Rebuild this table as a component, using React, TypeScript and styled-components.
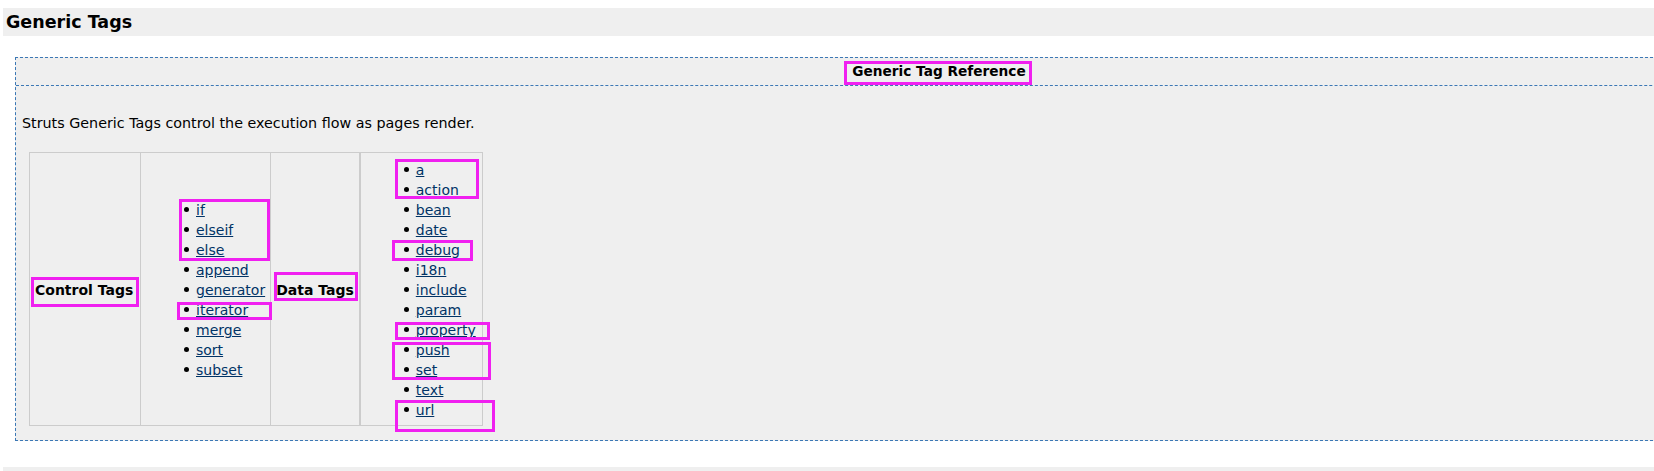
import React from "react";
import styled, { createGlobalStyle } from "styled-components";

const GlobalStyle = createGlobalStyle`
  html, body {
    margin: 0;
    padding: 0;
    background: #ffffff;
    overflow: hidden;
  }
  body {
    font-family: "DejaVu Sans", Verdana, sans-serif;
    font-size: 14px;
    color: #000000;
  }
`;

const Page = styled.div`
  position: relative;
  display: flow-root;
  width: 1654px;
  min-height: 471px;
`;

const SectionTitle = styled.h2`
  margin: 8px 0 0 3px;
  padding: 0 0 0 3px;
  height: 28px;
  line-height: 28px;
  background: #efefef;
  font-size: 17.5px;
  font-weight: bold;
  white-space: nowrap;
`;

const SectionBar = styled.div`
  margin: 26px 0 0 3px;
  height: 28px;
  background: #efefef;
`;

const Panel = styled.div`
  margin: 21px 0 0 15px;
  width: 1846px;
  background: #efefef;
  border: 1px dashed #3c78b5;
`;

const PanelHeader = styled.div`
  height: 27px;
  line-height: 27px;
  text-align: center;
  font-size: 13.7px;
  font-weight: bold;
  border-bottom: 1px dashed #3c78b5;
`;

const PanelBody = styled.div`
  padding: 29px 6px 14px 6px;
`;

const Intro = styled.p`
  margin: 0 0 21px 0;
  line-height: 16px;
  font-size: 14.3px;
`;

const TagTable = styled.table`
  margin-left: 7px;
  border-collapse: separate;
  border-spacing: 0;
  table-layout: fixed;
`;

const Cell = styled.td<{ $w: number; $left?: number; $last?: boolean }>`
  width: ${(p) => p.$w}px;
  padding: 7px 5px 5px 5px;
  vertical-align: middle;
  text-align: left;
  border-top: 1px solid #cccccc;
  border-bottom: 1px solid #cccccc;
  border-left: ${(p) => p.$left ?? 1}px solid #cccccc;
  border-right: ${(p) => (p.$last ? "1px solid #cccccc" : "none")};
`;

const HeadCell = styled(Cell).attrs({ as: "th" })`
  font-weight: bold;
  white-space: nowrap;
`;

const TagList = styled.ul`
  margin: 0;
  padding: 0 0 0 50px;
  list-style: none;
`;

const TagItem = styled.li`
  position: relative;
  line-height: 20px;
  height: 20px;

  &::before {
    content: "";
    position: absolute;
    left: -12px;
    top: 7px;
    width: 5px;
    height: 5px;
    border-radius: 50%;
    background: #000000;
  }
`;

const TagLink = styled.a`
  color: #003366;
  text-decoration: underline;
`;

const Highlight = styled.div<{ $x: number; $y: number; $w: number; $h: number }>`
  position: absolute;
  left: ${(p) => p.$x}px;
  top: ${(p) => p.$y}px;
  width: ${(p) => p.$w}px;
  height: ${(p) => p.$h}px;
  box-sizing: border-box;
  border: 3px solid #f020f0;
  pointer-events: none;
`;

const controlTags = ["if", "elseif", "else", "append", "generator", "iterator", "merge", "sort", "subset"];
const dataTags = ["a", "action", "bean", "date", "debug", "i18n", "include", "param", "property", "push", "set", "text", "url"];

const highlights = [
  { x: 844, y: 61, w: 188, h: 24 },
  { x: 31, y: 277, w: 108, h: 30 },
  { x: 274, y: 272, w: 84, h: 29 },
  { x: 179, y: 199, w: 91, h: 62 },
  { x: 177, y: 302, w: 95, h: 18 },
  { x: 395, y: 159, w: 84, h: 40 },
  { x: 392, y: 240, w: 81, h: 21 },
  { x: 395, y: 322, w: 95, h: 18 },
  { x: 392, y: 342, w: 99, h: 38 },
  { x: 395, y: 400, w: 100, h: 32 },
];

export default function App() {
  return (
    <>
      <GlobalStyle />
      <Page>
        <SectionTitle>Generic Tags</SectionTitle>
        <Panel>
          <PanelHeader>Generic Tag Reference</PanelHeader>
          <PanelBody>
            <Intro>Struts Generic Tags control the execution flow as pages render.</Intro>
            <TagTable>
              <tbody>
                <tr>
                  <HeadCell $w={100}>Control Tags</HeadCell>
                  <Cell $w={119}>
                    <TagList>
                      {controlTags.map((t) => (
                        <TagItem key={t}>
                          <TagLink href="#">{t}</TagLink>
                        </TagItem>
                      ))}
                    </TagList>
                  </Cell>
                  <HeadCell $w={77}>Data Tags</HeadCell>
                  <Cell $w={111} $left={2} $last>
                    <TagList>
                      {dataTags.map((t) => (
                        <TagItem key={t}>
                          <TagLink href="#">{t}</TagLink>
                        </TagItem>
                      ))}
                    </TagList>
                  </Cell>
                </tr>
              </tbody>
            </TagTable>
          </PanelBody>
        </Panel>
        <SectionBar />
        {highlights.map((h, i) => (
          <Highlight key={i} $x={h.x} $y={h.y} $w={h.w} $h={h.h} />
        ))}
      </Page>
    </>
  );
}
